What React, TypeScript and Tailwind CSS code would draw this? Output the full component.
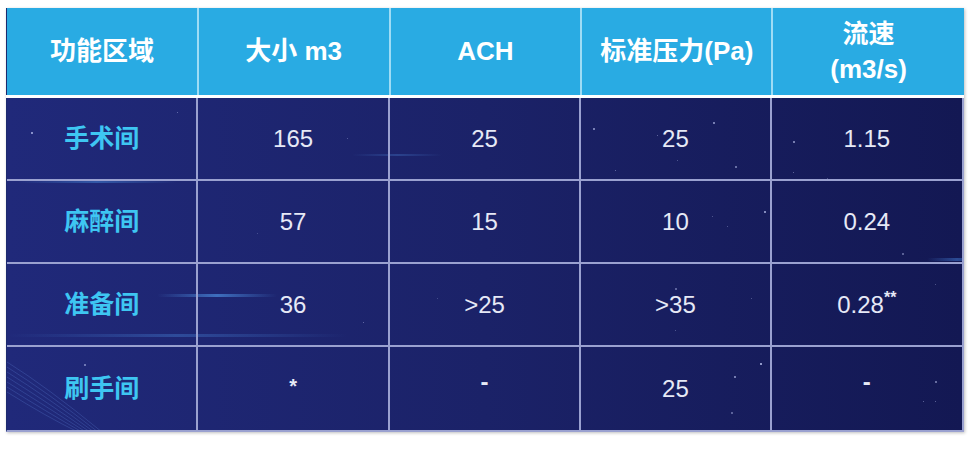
import React from "react"

const font = { fontFamily: '"Liberation Sans", "Noto Sans CJK SC", sans-serif' }

const headers = [
  ["功能区域"],
  ["大小 m3"],
  ["ACH"],
  ["标准压力(Pa)"],
  ["流速", "(m3/s)"],
]

const rows = [
  ["手术间", "165", "25", "25", "1.15"],
  ["麻醉间", "57", "15", "10", "0.24"],
  ["准备间", "36", ">25", ">35", "0.28**"],
  ["刷手间", "*", "-", "25", "-"],
]

const widths = ["w-[192px]", "w-[192px]", "w-[192px]", "w-[191px]", "w-[191px]"]

// decorative stars over the dark body: [x, y, size, opacity]
const stars: [number, number, number, number][] = [
  [24, 34, 2, 0.8], [170, 14, 1, 0.5], [340, 40, 1, 0.4], [586, 30, 2, 0.7],
  [650, 37, 1, 0.5], [706, 24, 2, 0.7], [728, 68, 2, 0.6], [608, 72, 1, 0.5],
  [670, 62, 1, 0.4], [786, 43, 2, 0.7], [786, 74, 1, 0.5], [757, 113, 2, 0.8],
  [720, 128, 1, 0.4], [705, 118, 1, 0.4], [668, 190, 2, 0.5], [744, 200, 1, 0.4],
  [668, 232, 1, 0.4], [928, 186, 1, 0.4], [895, 155, 2, 0.5], [356, 224, 1, 0.5],
  [550, 350, 1, 0.4], [77, 266, 2, 0.6], [753, 265, 2, 0.9], [727, 278, 2, 0.7],
  [724, 314, 2, 0.5], [928, 283, 2, 0.6], [916, 303, 1, 0.5], [928, 303, 1, 0.5],
  [820, 80, 1, 0.4], [430, 200, 1, 0.3], [250, 135, 1, 0.3], [960, 250, 1, 0.5],
]

export default function App() {
  return (
    <div className="w-[976px] h-[452px] bg-white pt-[8px] pl-[6px]" style={font}>
      <div className="w-[958px] shadow-[1px_1px_3px_rgba(0,0,0,0.25)]">
        {/* header */}
        <div className="flex h-[87px] bg-[#29abe3] border-l border-[#1d2a6e]">
          {headers.map((h, i) => (
            <div
              key={i}
              className={`${widths[i]} flex flex-col items-center justify-center text-white font-bold text-[26px] leading-[35px] ${
                i < 4 ? "border-r-2 border-[#9edcf5]" : ""
              }`}
            >
              {h.map((line) => (
                <span key={line}>{line}</span>
              ))}
            </div>
          ))}
        </div>
        <div className="h-[3px] bg-white" />

        {/* body */}
        <div className="relative overflow-hidden bg-gradient-to-r from-[#20297a] via-[#1b2268] to-[#131853] border-l border-r-2 border-b-2 border-l-[#1d2a6e] border-r-[#9aa1d0] border-b-[#9aa1d0]">
          {/* glow streaks */}
          <div className="absolute left-[10px] top-[82px] w-[160px] h-[3px] rounded-full bg-gradient-to-r from-transparent via-[#3f78c8] to-transparent opacity-60" />
          <div className="absolute left-[150px] top-[196px] w-[120px] h-[3px] rounded-full bg-gradient-to-r from-transparent via-[#4c8ede] to-transparent opacity-70" />
          <div className="absolute left-[0px] top-[236px] w-[340px] h-[3px] rounded-full bg-gradient-to-r from-transparent via-[#3e6fc0] to-transparent opacity-50" />
          <div className="absolute left-[345px] top-[56px] w-[90px] h-[2px] rounded-full bg-gradient-to-r from-transparent via-[#3a62b0] to-transparent opacity-50" />
          <div className="absolute left-[920px] top-[160px] w-[60px] h-[3px] rounded-full bg-gradient-to-r from-transparent via-[#3b6dc0] to-transparent opacity-60" />
          <svg className="absolute left-0 top-[254px]" width="100" height="80" viewBox="0 0 100 80">
            {[0, 5, 10, 15, 20, 25, 30].map((d) => (
              <path
                key={d}
                d={`M0 ${10 + d} Q 40 ${35 + d} ${95 - d * 0.8} 80`}
                stroke="#5d82d6"
                strokeWidth="0.8"
                fill="none"
                opacity={0.35}
              />
            ))}
          </svg>
          {stars.map(([x, y, s, o], i) => (
            <span
              key={i}
              className="absolute rounded-full bg-[#cdd6ff]"
              style={{ left: x, top: y, width: s, height: s, opacity: o }}
            />
          ))}

          {rows.map((r, ri) => (
            <div
              key={ri}
              className={`relative flex h-[83px] ${ri < 3 ? "border-b-2 border-[#9aa1d0]" : ""}`}
            >
              {r.map((c, ci) => (
                <div
                  key={ci}
                  className={`${widths[ci]} flex items-center justify-center ${
                    ci < 4 ? "border-r-2 border-[#9aa1d0]" : ""
                  } ${
                    ci === 0
                      ? "text-[#3ec6f2] font-bold text-[25px]"
                      : "text-[#e6e9f6] text-[24px]"
                  }`}
                >
                  {c === "0.28**" ? (
                    <span>
                      0.28<sup className="text-[16px] font-bold align-[2px]">**</sup>
                    </span>
                  ) : c === "*" ? (
                    <span className="text-[20px] font-bold -mt-[6px]">*</span>
                  ) : c === "-" ? (
                    <span className="-mt-[14px] font-bold">-</span>
                  ) : (
                    c
                  )}
                </div>
              ))}
            </div>
          ))}
        </div>
      </div>
    </div>
  )
}
